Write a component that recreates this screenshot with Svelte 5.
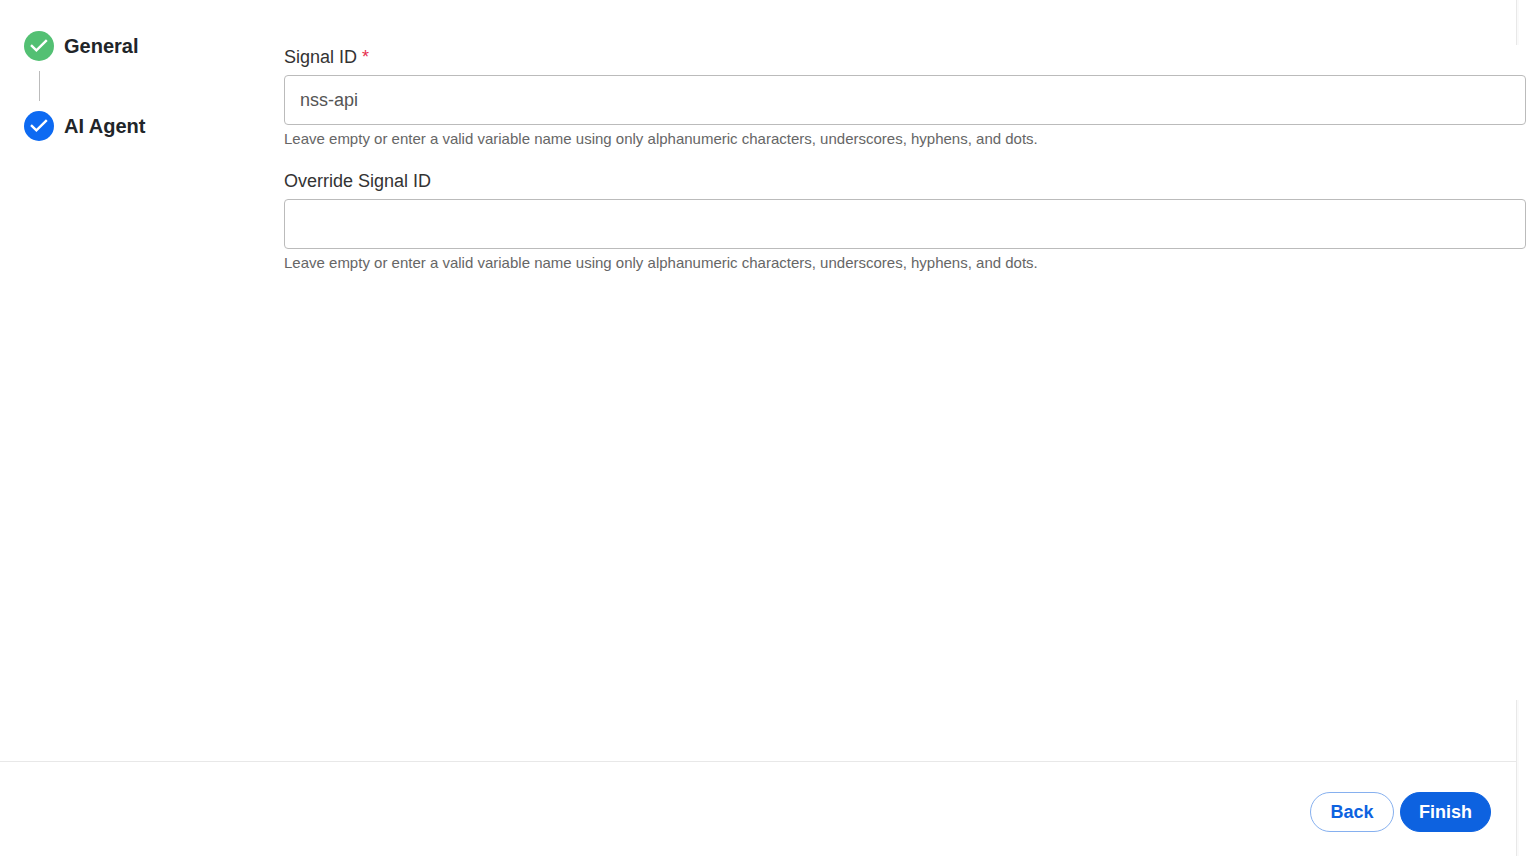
<script>
  const steps = [
    { label: 'General', state: 'done' },
    { label: 'AI Agent', state: 'active' }
  ];
  const hint =
    'Leave empty or enter a valid variable name using only alphanumeric characters, underscores, hyphens, and dots.';

  let signalId = $state('nss-api');
  let overrideId = $state('');
</script>

<div class="wizard">
  <div class="body">
    <ol class="steps">
      {#each steps as step}
        <li class="step">
          <span class="badge {step.state}">
            <svg viewBox="0 0 30 30" width="30" height="30" aria-hidden="true">
              <path d="M7 14.2l5.4 5.2L22.8 9.2" fill="none" stroke="#fff" stroke-width="2.4" />
            </svg>
          </span>
          <span>{step.label}</span>
        </li>
      {/each}
    </ol>

    <form class="fields" id="signal-form">
      <div class="field">
        <label for="signal-id">Signal ID <span class="required">*</span></label>
        <input id="signal-id" type="text" bind:value={signalId} />
        <p class="hint">{hint}</p>
      </div>
      <div class="field">
        <label for="override-id">Override Signal ID</label>
        <input id="override-id" type="text" bind:value={overrideId} />
        <p class="hint">{hint}</p>
      </div>
    </form>
  </div>

  <footer class="footer">
    <button type="button" class="btn">Back</button>
    <button type="submit" form="signal-form" class="btn primary">Finish</button>
  </footer>
</div>

<style>
  :global(body) {
    background: #fff;
  }
  .wizard {
    display: flex;
    flex-direction: column;
    min-height: 100vh;
    font-family: 'Liberation Sans', Arial, sans-serif;
    color: #333;
    background:
      linear-gradient(90deg, #e8e8e8 1px, #fafafa 1px) right 17px top 0 / 3px 45px no-repeat,
      linear-gradient(90deg, #e8e8e8 1px, #fafafa 1px) right 17px bottom 0 / 3px 156px no-repeat;
  }
  .body {
    display: flex;
    flex: 1;
  }
  .steps {
    flex: 0 0 260px;
    margin: 0;
    padding: 31px 0 0;
    list-style: none;
  }
  .step {
    display: flex;
    align-items: center;
    gap: 10px;
    padding-left: 24px;
    color: #212529;
    font-size: 20px;
    font-weight: bold;
    line-height: 30px;
    flex-wrap: wrap;
  }
  .step + .step::before {
    content: '';
    flex: 0 0 100%;
    height: 30px;
    margin-left: 15px;
    border-left: 1px solid #bbb;
    box-sizing: border-box;
  }
  .step + .step {
    margin-top: 10px;
  }
  .badge {
    width: 30px;
    height: 30px;
    border-radius: 50%;
  }
  .badge svg {
    display: block;
  }
  .done {
    background: #53c073;
  }
  .active {
    background: #0d6af2;
  }
  .fields {
    flex: 1;
    padding: 45px 10px 0 24px;
  }
  .field {
    margin-bottom: 20px;
  }
  label {
    display: block;
    margin-bottom: 6px;
    font-size: 18px;
    line-height: 24px;
  }
  .required {
    color: #e6304f;
  }
  input {
    display: block;
    box-sizing: border-box;
    width: 100%;
    height: 50px;
    padding: 0 15px;
    border: 1px solid #bbb;
    border-radius: 4px;
    background: #fff;
    color: #555;
    font: inherit;
    font-size: 18px;
  }
  .hint {
    margin: 4px 0 0;
    color: #666;
    font-size: 15px;
    line-height: 20px;
  }
  .footer {
    display: flex;
    justify-content: flex-end;
    gap: 6px;
    margin-right: 20px;
    padding: 30px 25px 24px;
    border-top: 1px solid #e8e8e8;
  }
  .btn {
    min-width: 84px;
    height: 40px;
    padding: 0 18px;
    border: 1px solid #86b0ef;
    border-radius: 20px;
    background: #fff;
    color: #0d62e0;
    font: bold 18px 'Liberation Sans', Arial, sans-serif;
    cursor: pointer;
  }
  .primary {
    border-color: #0d62e0;
    background: #0d62e0;
    color: #fff;
  }
</style>
